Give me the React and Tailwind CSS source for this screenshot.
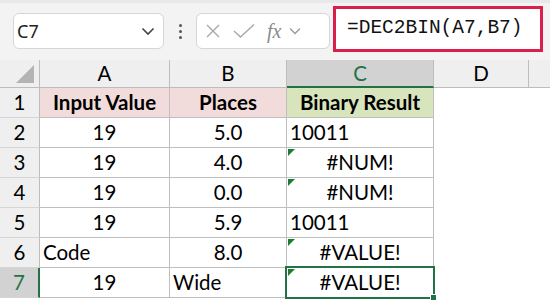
import React from 'react';

const cols = ['A', 'B', 'C', 'D'];

const rows = [
  { n: 1, a: 'Input Value', b: 'Places', c: 'Binary Result', head: true },
  { n: 2, a: '19', b: '5.0', c: '10011', cAlign: 'left' },
  { n: 3, a: '19', b: '4.0', c: '#NUM!', flag: true },
  { n: 4, a: '19', b: '0.0', c: '#NUM!', flag: true },
  { n: 5, a: '19', b: '5.9', c: '10011', cAlign: 'left' },
  { n: 6, a: 'Code', aAlign: 'left', b: '8.0', c: '#VALUE!', flag: true },
  { n: 7, a: '19', b: 'Wide', bAlign: 'left', c: '#VALUE!', flag: true, selected: true },
];

const align = (a) => (a === 'left' ? 'justify-start pl-[3px]' : 'justify-center');

const Flag = () => (
  <span className="absolute left-[1px] top-[1px] w-0 h-0 border-t-[7px] border-t-[#1e7b34] border-r-[7px] border-r-transparent" />
);

const App = () => {
  return (
    <div className="w-[550px] h-[300px] overflow-hidden bg-white" style={{ fontFamily: 'Lato, "Open Sans", sans-serif' }}>
      {/* Formula bar */}
      <div className="h-[60px] bg-[#f3f3f3] border-t-[3px] border-[#e6e8ea] flex items-start pt-[10px] pl-[13px]">
        <div className="w-[151px] h-[36px] bg-white border border-[#d6d6d6] rounded-[6px] flex items-center justify-between pl-[3px] pr-[8px]">
          <span className="text-[18px] text-[#222]" style={{ fontFamily: '"Noto Sans", sans-serif' }}>C7</span>
          <svg width="14" height="9" viewBox="0 0 14 9" fill="none" stroke="#444" strokeWidth="1.6">
            <path d="M1.5 1.5 L7 7 L12.5 1.5" />
          </svg>
        </div>
        <div className="w-[32px] h-[36px] flex flex-col items-center justify-center gap-[3px]">
          <span className="w-[3px] h-[3px] rounded-full bg-[#555]" />
          <span className="w-[3px] h-[3px] rounded-full bg-[#555]" />
          <span className="w-[3px] h-[3px] rounded-full bg-[#555]" />
        </div>
        <div className="w-[134px] h-[36px] bg-white border border-[#d6d6d6] rounded-[6px] flex items-center pl-[8px] gap-[12px]">
          <svg width="16" height="16" viewBox="0 0 16 16" fill="none" stroke="#a8a8a8" strokeWidth="1.4">
            <path d="M2 2 L14 14 M14 2 L2 14" />
          </svg>
          <svg width="22" height="16" viewBox="0 0 22 16" fill="none" stroke="#a8a8a8" strokeWidth="1.4">
            <path d="M1 8 L7.5 14 L21 1.5" />
          </svg>
          <span className="text-[20px] italic text-[#8a8a8a] leading-none" style={{ fontFamily: '"Liberation Serif", serif' }}>fx</span>
          <svg width="12" height="8" viewBox="0 0 12 8" fill="none" stroke="#999" strokeWidth="1.3" className="-ml-[4px]">
            <path d="M1 1.5 L6 6.5 L11 1.5" />
          </svg>
        </div>
        <div className="ml-[3px] -mt-[7px] w-[210px] h-[46px] bg-white border-[3px] border-[#dc1e4a] flex items-center pl-[11px]">
          <span className="text-[19.5px] text-[#111]" style={{ fontFamily: '"Liberation Mono", "DejaVu Sans Mono", monospace' }}>=DEC2BIN(A7,B7)</span>
        </div>
      </div>

      {/* Grid */}
      <div className="grid grid-cols-[40px_130px_117px_147px_95px_21px] text-[20.5px] text-black">
        {/* Column headers */}
        <div className="h-[28px] bg-[#efefef] border-r border-b border-[#bdbdbd] relative">
          <span className="absolute right-[5px] bottom-[4px] w-0 h-0 border-b-[18px] border-b-[#b4b4b4] border-l-[18px] border-l-transparent" />
        </div>
        {cols.map((c) => (
          <div
            key={c}
            className={
              c === 'C'
                ? 'h-[28px] bg-[#d2d2d2] border-r border-[#bdbdbd] border-b-2 border-b-[#217346] text-[#217346] flex items-center justify-center'
                : 'h-[28px] bg-[#efefef] border-r border-b border-[#bdbdbd] flex items-center justify-center'
            }
          >
            {c}
          </div>
        ))}
        <div className="h-[28px] bg-[#efefef] border-b border-[#bdbdbd]" />

        {rows.map((r) => (
          <React.Fragment key={r.n}>
            <div
              className={
                r.selected
                  ? 'h-[30px] bg-[#d2d2d2] border-b border-[#d5d5d5] border-r-2 border-r-[#217346] text-[#217346] flex items-center justify-center'
                  : 'h-[30px] bg-[#efefef] border-b border-[#d5d5d5] border-r border-r-[#bdbdbd] flex items-center justify-center'
              }
            >
              {r.n}
            </div>
            <div className={`h-[30px] border-r border-b border-[#bfbfbf] flex items-center ${align(r.aAlign)} ${r.head ? 'bg-[#f2dcdb] font-bold' : ''}`}>
              {r.a}
            </div>
            <div className={`h-[30px] border-r border-b border-[#bfbfbf] flex items-center ${align(r.bAlign)} ${r.head ? 'bg-[#f2dcdb] font-bold' : ''}`}>
              {r.b}
            </div>
            <div className={`h-[30px] border-r border-b border-[#bfbfbf] flex items-center relative ${align(r.cAlign)} ${r.head ? 'bg-[#d8e4bc] font-bold' : ''}`}>
              {r.flag && <Flag />}
              {r.c}
              {r.selected && (
                <>
                  <span className="absolute -left-[2px] -top-[2px] -right-[2px] -bottom-[2px] border-2 border-[#217346] pointer-events-none" />
                  <span className="absolute -right-[4px] -bottom-[4px] w-[7px] h-[7px] bg-[#217346] border border-white" />
                </>
              )}
            </div>
            <div className="h-[30px]" />
            <div className="h-[30px]" />
          </React.Fragment>
        ))}
      </div>
    </div>
  );
};

export default App;
